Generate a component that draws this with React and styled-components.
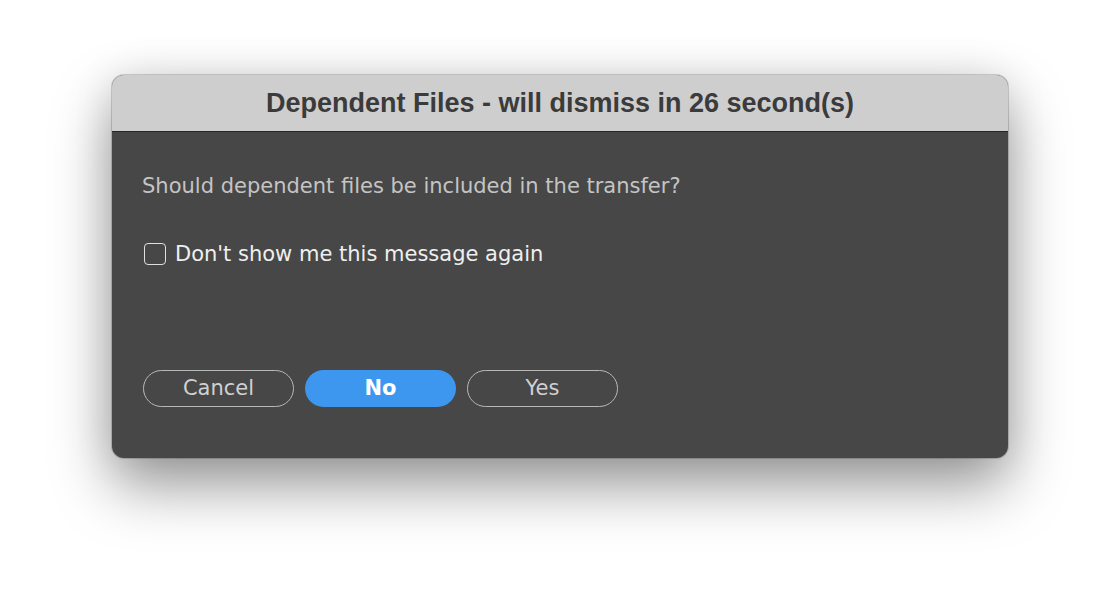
import React from "react";
import styled, { createGlobalStyle } from "styled-components";

const Global = createGlobalStyle`
  html, body { margin: 0; padding: 0; background: #ffffff; }
  #root { width: 1120px; height: 606px; }
`;

const Page = styled.div`
  width: 1120px;
  height: 606px;
  box-sizing: border-box;
  padding-top: 75px;
  display: flex;
  justify-content: center;
  align-items: flex-start;
  background: #ffffff;
  overflow: hidden;
`;

const Window = styled.div`
  width: 896px;
  height: 383px;
  border-radius: 12px;
  overflow: hidden;
  display: flex;
  flex-direction: column;
  background: #474747;
  box-shadow: 0 0 0 1px rgba(0, 0, 0, 0.16), 0 28px 60px rgba(0, 0, 0, 0.4),
    0 0 40px rgba(0, 0, 0, 0.1);
`;

const TitleBar = styled.div`
  height: 57px;
  flex: none;
  display: flex;
  align-items: center;
  justify-content: center;
  background: #cecece;
  border-bottom: 1px solid #262626;
  font-family: "Liberation Sans", Arial, sans-serif;
  font-weight: bold;
  font-size: 27px;
  color: #3b3b3b;
  padding-top: 1px;
  box-sizing: border-box;
`;

const Body = styled.div`
  flex: 1;
  display: flex;
  flex-direction: column;
  padding: 42px 30px 0 30px;
  font-family: "DejaVu Sans", "Noto Sans", sans-serif;
`;

const Message = styled.div`
  font-size: 21px;
  color: #c4c4c4;
  line-height: 24px;
`;

const CheckRow = styled.label`
  margin-top: 44px;
  display: flex;
  align-items: center;
  gap: 9px;
  font-size: 21px;
  line-height: 24px;
  color: #efefef;
  padding-left: 2px;
`;

const Box = styled.span`
  width: 22px;
  height: 22px;
  border: 1.5px solid #e0e0e0;
  border-radius: 4px;
  box-sizing: border-box;
  display: inline-block;
`;

const Buttons = styled.div`
  margin-top: 104px;
  display: flex;
  gap: 11px;
  padding-left: 1px;
`;

const Button = styled.button`
  width: 151px;
  height: 37px;
  border-radius: 19px;
  box-sizing: border-box;
  font-family: "DejaVu Sans", "Noto Sans", sans-serif;
  font-size: 21px;
  line-height: 1;
  cursor: pointer;
  border: ${(p) => (p.$primary ? "none" : "1.5px solid #b8b8b8")};
  background: ${(p) => (p.$primary ? "#3d97ef" : "transparent")};
  color: ${(p) => (p.$primary ? "#ffffff" : "#d0d0d0")};
  font-weight: ${(p) => (p.$primary ? "600" : "normal")};
  padding: 0;
`;

export default function App() {
  return (
    <>
      <Global />
      <Page>
        <Window>
          <TitleBar>Dependent Files - will dismiss in 26 second(s)</TitleBar>
          <Body>
            <Message>Should dependent files be included in the transfer?</Message>
            <CheckRow>
              <Box />
              Don't show me this message again
            </CheckRow>
            <Buttons>
              <Button>Cancel</Button>
              <Button $primary>No</Button>
              <Button>Yes</Button>
            </Buttons>
          </Body>
        </Window>
      </Page>
    </>
  );
}
